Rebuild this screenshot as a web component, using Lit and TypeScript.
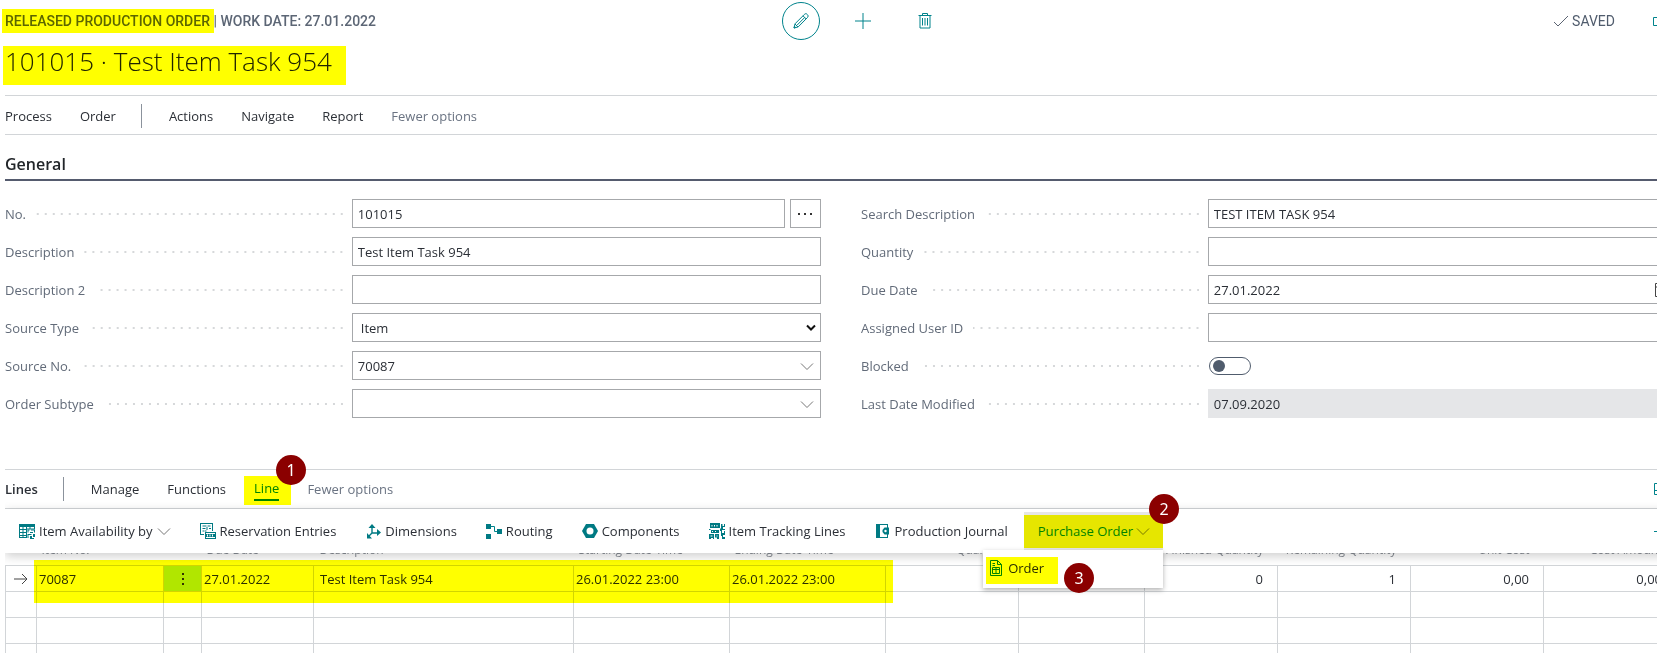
import { LitElement, html, svg, css, nothing } from "lit";
import type { TemplateResult } from "lit";
import { customElement, state } from "lit/decorators.js";
import { classMap } from "lit/directives/class-map.js";

type Kind = "text" | "assist" | "select" | "lookup" | "date" | "switch" | "readonly";

interface Field {
  id: string;
  label: string;
  value: string;
  kind: Kind;
}

interface Column {
  title: string;
  width: number;
  value: string;
  kind?: "arrow" | "more" | "num" | "wide";
}

const LEFT: Field[] = [
  { id: "no", label: "No.", value: "101015", kind: "assist" },
  { id: "description", label: "Description", value: "Test Item Task 954", kind: "text" },
  { id: "description2", label: "Description 2", value: "", kind: "text" },
  { id: "source-type", label: "Source Type", value: "Item", kind: "select" },
  { id: "source-no", label: "Source No.", value: "70087", kind: "lookup" },
  { id: "order-subtype", label: "Order Subtype", value: "", kind: "lookup" },
];

const RIGHT: Field[] = [
  { id: "search", label: "Search Description", value: "TEST ITEM TASK 954", kind: "text" },
  { id: "quantity", label: "Quantity", value: "", kind: "text" },
  { id: "due", label: "Due Date", value: "27.01.2022", kind: "date" },
  { id: "user", label: "Assigned User ID", value: "", kind: "text" },
  { id: "blocked", label: "Blocked", value: "", kind: "switch" },
  { id: "modified", label: "Last Date Modified", value: "07.09.2020", kind: "readonly" },
];

const COLUMNS: Column[] = [
  { title: "", width: 31, value: "", kind: "arrow" },
  { title: "Item No.", width: 127, value: "70087" },
  { title: "", width: 38, value: "", kind: "more" },
  { title: "Due Date", width: 112, value: "27.01.2022" },
  { title: "Description", width: 260, value: "Test Item Task 954", kind: "wide" },
  { title: "Starting Date-Time", width: 156, value: "26.01.2022 23:00" },
  { title: "Ending Date-Time", width: 156, value: "26.01.2022 23:00" },
  { title: "Quantity", width: 133, value: "1", kind: "num" },
  { title: "", width: 126, value: "" },
  { title: "Finished Quantity", width: 133, value: "0", kind: "num" },
  { title: "Remaining Quantity", width: 133, value: "1", kind: "num" },
  { title: "Unit Cost", width: 133, value: "0,00", kind: "num" },
  { title: "Cost Amount", width: 133, value: "0,00", kind: "num" },
];

const icon = (body: unknown, cls = "icon") =>
  html`<svg class=${cls} viewBox="0 0 16 16" width="16" height="16" aria-hidden="true">${body}</svg>`;

const ICONS = {
  pencil: svg`<path class="ln" d="M1 15l1-4.200L11.300 1.500a1.800 1.800 0 0 1 3 0 2 2 0 0 1 .2 3L5.200 13.900zM2 11l3 3M10 2.800l3.200 3.200M4 12.200l7.800-7.800M1 15l1.700-.5-1.200-1.200z"/>`,
  plus: svg`<path class="ln" d="M8 0v16M0 8h16"/>`,
  trash: svg`<path class="ln" d="M1.500 2.500h13M5.500 2.500v-2h5v2M3 2.500v12.500h10V2.500M5.500 5v7.500M8 5v7.500M10.500 5v7.500"/>`,
  check: svg`<path class="ln thin" d="M1 9l4 4L15 3"/>`,
  share: svg`<path class="ln" d="M8 4.500H.5v8h11V9M6 8c1-3 4-5 8-5M11 .5L14.500 3 11 5.500"/>`,
  calendar: svg`<path class="dk" d="M.5 1.500h14v13H.5zM.5 5h14M3 8h2M7 8h2M11 8h2M3 11h2M7 11h2"/>`,
  layout: svg`<path class="ln" d="M.5 2.500h14v11H.5zM.5 9.500h14M5.500 2.500v11"/>`,
  pin: svg`<path class="ln" d="M0 8.500h6M6 4v8M6 5.500h7v5H6"/>`,
  chevron: svg`<path class="chev" d="M2 5.500l6 6 6-6"/>`,
  caret: svg`<path class="caret" d="M4 5.500l4 4 4-4"/>`,
  availability: svg`
    <path class="fl" d="M0 1h16v14H0z"/>
    <path class="wh" d="M1 4h2.500v2H1zM4.500 4H7v2H4.500zM8 4h2.500v1.500H8zM11.500 4h3.500v1.500h-3.500zM1 7h2.500v2H1zM4.500 7H7v2H4.500zM1 10h2.500v2H1zM4.500 10H7v2H4.500zM1 13h2.500v1H1zM4.500 13H7v1H4.500z"/>
    <path class="wh" d="M8 6.500h8V16H8z"/>
    <path class="fl" d="M8.500 6.500h2v1h-1v2h-1zM12 6.500h4v3h-1v-2h-3zM11 9h3v1h-3zM8.500 11h4v1h-3v3h-1zM14 11h2v3h-2zM11 13h2v3h-2zM13 15h2v1h-2z"/>`,
  reservation: svg`
    <path class="fl" d="M0 0h13v8h-1V1H1v10h3v1H0z"/>
    <path class="fl" d="M2.500 2.500h4v1h-4zM2.500 5h3v1h-3zM2.500 7.500h2v1h-2zM7.500 2.500h3v1h-3zM6.500 4h1v3h-1zM9 5h2v1H9zM5 7.500h1.500v1H5z"/>
    <path class="fl" d="M5 9h11v7H5z"/>
    <path class="wh" d="M6 10h9v1H6zM6 14h9v1H6zM7 11.500h1v2H7zM9.500 11.500h1v2h-1zM12 11.500h1v2h-1z"/>`,
  dimensions: svg`
    <path class="ln wide" d="M7 3v7h6M7 10l-4 4"/>
    <path class="fl" d="M7 1l3.500 4h-7zM16 9.500L12 13V6zM2 15.500V10l5 5.500z"/>`,
  routing: svg`
    <path class="fl" d="M0 1h5v5H0zM0 11h5v5H0zM11 6h5v5h-5z"/>
    <path class="ln" d="M5 3.500h3.500v5H11"/>`,
  components: svg`
    <path class="fl" d="M4 1h8l4 7-4 7H4L0 8z"/><circle class="wh" cx="8" cy="8" r="3.500"/>`,
  tracking: svg`
    <path class="fl" d="M1 0h10v5H1zM2 7h8v3H2zM0 6h1.500v1H0zM12 1h1.500v2H15V1h1v3h-2v2h2v1h-3v3h2V8h1v4h-2v2h2v2h-3v-3h-1V8h-1V5.500h1zM0 11h5v5H4v-1H2v1H0zM6 11h4v5H8v-1.500H6z"/>
    <path class="wh" d="M2.500 2h1v1.500h-1zM5 2h1v1.500H5zM7.500 2h1v1.500h-1zM3 8h1v1H3zM6 8h1v1H6zM1.500 12.500h2v1h-2zM7.500 12.500h1v1h-1z"/>`,
  journal: svg`
    <path class="fl" d="M1 1h12v14H1z"/><path class="wh" d="M5 2h7v12H5z"/>
    <path class="fl" d="M9.500 4.500H14v7H9.500L7.500 9V7z"/><circle class="wh" cx="10.500" cy="8" r="1.200"/>`,
  order: svg`
    <path class="ln" d="M2.500.500h7l4 4v11h-11zM9.500.500v4h4M4.500 7.500h7v6h-7zM8 7.500v6M4.500 5.500H7M4.500 3.500H7M4.500 9.500h7"/>`,
};

const LINE_ACTIONS: { label: string; glyph: unknown; menu?: boolean }[] = [
  { label: "Item Availability by", glyph: ICONS.availability, menu: true },
  { label: "Reservation Entries", glyph: ICONS.reservation },
  { label: "Dimensions", glyph: ICONS.dimensions },
  { label: "Routing", glyph: ICONS.routing },
  { label: "Components", glyph: ICONS.components },
  { label: "Item Tracking Lines", glyph: ICONS.tracking },
  { label: "Production Journal", glyph: ICONS.journal },
];

@customElement("app-root")
export class AppRoot extends LitElement {
  @state() private blocked = false;

  static styles = css`
    :host {
      display: block;
      height: 100vh;
      overflow: hidden;
      background: #fff;
      color: #2b2f36;
      font: 13px/20px "Open Sans", "Noto Sans", sans-serif;
    }
    * { box-sizing: border-box; }
    button {
      font: inherit;
      color: inherit;
      background: none;
      border: 0;
      padding: 0;
      white-space: nowrap;
    }
    .page { margin: 0 -20px 0 5px; }
    .icon { flex: none; display: block; }
    .ln { fill: none; stroke: #00838c; stroke-width: 1; }
    .ln.wide { stroke: #007a83; stroke-width: 1.4; }
    .fl { fill: #007a83; }
    .wh { fill: #fff; }
    .dk { fill: none; stroke: #444; }
    .chev { fill: none; stroke: #777; }
    .caret { fill: none; stroke: #111; stroke-width: 2; }
    .thin { stroke: #5b6472; }

    /* marker pen strokes */
    .marked { position: relative; }
    .marked::after {
      content: "";
      position: absolute;
      inset: 0;
      background: #ff0;
      mix-blend-mode: multiply;
      pointer-events: none;
    }

    .top {
      display: grid;
      grid-template-columns: 1fr auto 1fr;
      align-items: center;
      height: 42px;
    }
    .caption {
      font: 500 14px/20px Roboto, sans-serif;
      color: #5c6675;
      white-space: nowrap;
    }
    .caption .marked::after { inset: -4px -4px -4px -3px; }
    .tools { display: flex; align-items: center; gap: 46px; padding-left: 33px; }
    .tools button { display: flex; }
    .tools .ring {
      width: 38px;
      height: 38px;
      margin-right: -11px;
      border: 1px solid #00838c;
      border-radius: 50%;
      align-items: center;
      justify-content: center;
    }
    .status {
      display: flex;
      justify-content: flex-end;
      align-items: center;
      gap: 3px;
      font: 400 14px/20px Roboto, sans-serif;
      color: #505c6d;
    }
    .status button { margin-left: 35px; padding-right: 8px; }

    h1 {
      margin: 0 0 15px;
      font: 300 26px/38px "Open Sans", "Noto Sans", sans-serif;
      color: #212529;
      white-space: nowrap;
    }
    h1 .marked { display: inline-block; padding-right: 14px; }
    h1 .marked::after { inset: 4px 0 -5px -2px; }

    .bar {
      display: flex;
      align-items: center;
      gap: 28px;
      height: 40px;
      padding-top: 2px;
      border-top: 1px solid #d2d5d8;
      border-bottom: 1px solid #d2d5d8;
    }
    .muted { color: #6a7382; }
    .rule { width: 1px; height: 24px; background: #8b929c; margin: 0 -1px 0 -3px; }

    h2 {
      height: 46px;
      margin: 0 0 18px;
      padding-top: 17px;
      border-bottom: 2px solid #555b6e;
      font: 600 16px/24px "Open Sans", "Noto Sans", sans-serif;
      color: #212529;
    }
    .fields {
      display: grid;
      grid-template-columns: 1fr 1fr;
      column-gap: 40px;
    }
    .group { display: grid; row-gap: 9px; align-content: start; }
    .field {
      display: grid;
      grid-template-columns: 17fr 23fr;
      height: 29px;
      align-items: center;
    }
    .field label {
      display: flex;
      align-items: center;
      gap: 10px;
      padding-right: 9px;
      color: #626b79;
      white-space: nowrap;
    }
    .field label::after {
      content: "";
      flex: 1;
      height: 2px;
      background: linear-gradient(90deg, transparent 6px, #d6d8da 6px) right 0 top 0 / 8px 2px;
    }
    .control { display: flex; gap: 5px; height: 29px; align-items: center; }
    .box {
      display: flex;
      flex: 1;
      align-items: center;
      height: 29px;
      min-width: 0;
      border: 1px solid #a6a8ab;
      background: #fff;
      padding-right: 5px;
    }
    .box.native { padding-right: 1px; }
    .box input, .box select {
      flex: 1;
      min-width: 0;
      height: 100%;
      border: 0;
      outline: 0;
      background: none;
      padding: 0 5px;
      font: inherit;
      color: #2b2f36;
      appearance: none;
    }
    .box select { padding-left: 8px; }
    .box.readonly { border-color: #e5e6e8; background: #e5e6e8; }
    .assist {
      display: grid;
      place-items: center;
      width: 31px;
      height: 29px;
      border: 1px solid #a6a8ab;
    }
    .switch {
      appearance: none;
      display: flex;
      align-items: center;
      width: 42px;
      height: 18px;
      margin: 0 0 0 1px;
      padding: 0 3px;
      border: 1px solid #505c6d;
      border-radius: 9px;
      background: #fff;
    }
    .switch::before { content: ""; width: 12px; height: 12px; border-radius: 50%; background: #505c6d; }
    .switch:checked { justify-content: flex-end; }

    .lines { margin-top: 51px; }
    .lines .bar { padding: 0; }
    .lines .bar h3 { margin: 0; font: 600 13px/20px "Open Sans", "Noto Sans", sans-serif; }
    .bar .active {
      color: #00838c;
      position: relative;
      line-height: 21px;
      border-bottom: 2px solid #00838c;
    }
    .lines .bar .active.marked::after { inset: -2px -12px -6px -10px; }
    .end { margin-left: auto; padding-right: 7px; }
    .badge {
      position: absolute;
      z-index: 5;
      display: grid;
      place-items: center;
      width: 30px;
      height: 30px;
      border-radius: 50%;
      background: #8b0000;
      color: #fff;
      font: 16px/30px "Noto Sans", sans-serif;
    }
    .b1 { left: 22px; top: -23px; }
    .b2 { right: -16px; top: -18px; }
    .b3 { left: 81px; top: 13px; }

    .actions {
      position: relative;
      z-index: 2;
      display: flex;
      align-items: center;
      height: 44px;
      padding-left: 14px;
      gap: 29px;
      background: #fff;
      box-shadow: 0 3px 10px rgba(0, 0, 0, 0.2);
      clip-path: inset(-40px 0 -60px 0);
    }
    .actions > button { display: flex; align-items: center; gap: 4px; }
    .actions > button .icon + span + .icon { margin: 0 -1px; }
    .drop { position: relative; margin-left: -13px; }
    .drop > button {
      display: flex;
      align-items: center;
      gap: 2px;
      height: 38px;
      padding: 0 12px 0 14px;
      background: #e6e6e6;
      color: #00838c;
    }
    .drop > button.marked::after { inset: 3px 0 2px; }
    .menu {
      position: absolute;
      top: 38px;
      right: 0;
      width: 180px;
      height: 38px;
      background: #fff;
      box-shadow: 0 2px 5px rgba(0, 0, 0, 0.3);
    }
    .menu button { display: flex; align-items: center; gap: 4px; margin: 7px 3px; height: 27px; padding: 0 14px 5px 2px; }
    .menu button.marked::after { inset: 0; }

    .grid-area { position: relative; margin-top: -11px; }
    .grid-area .pen {
      position: absolute;
      left: 29px;
      width: 859px;
      top: 18px;
      height: 43px;
      background: #ff0;
      mix-blend-mode: multiply;
      pointer-events: none;
    }
    table { border-collapse: collapse; table-layout: fixed; width: 1671px; }
    th {
      height: 23px;
      padding: 0 5px;
      font: 12px/16px "Open Sans", "Noto Sans", sans-serif;
      color: #888d95;
      text-align: left;
      vertical-align: top;
      white-space: nowrap;
    }
    td {
      height: 26px;
      padding: 1px 2px 0;
      border: 1px solid #d2d5d8;
      white-space: nowrap;
      line-height: 20px;
    }
    td.wide, th.wide { padding-left: 6px; }
    td.num, th.num { text-align: right; padding-right: 14px; }
    td.more { background: #b1e6e8; }
    td .icon { margin: 0 auto; }
    .arrow { fill: none; stroke: #444; }
    .dot { fill: #333; }
  `;

  private renderControl(f: Field): TemplateResult {
    if (f.kind === "switch") {
      return html`<input
        class="switch"
        id=${f.id}
        type="checkbox"
        role="switch"
        .checked=${this.blocked}
        @change=${(e: Event) => (this.blocked = (e.target as HTMLInputElement).checked)}
      />`;
    }
    if (f.kind === "select") {
      return html`<div class="box native">
        <select id=${f.id}><option>${f.value}</option></select>
        ${icon(ICONS.caret)}
      </div>`;
    }
    const glyph = f.kind === "lookup" ? ICONS.chevron : f.kind === "date" ? ICONS.calendar : null;
    return html`<div class=${classMap({ box: true, readonly: f.kind === "readonly" })}>
        <input id=${f.id} type="text" .value=${f.value} ?readonly=${f.kind === "readonly"} />
        ${glyph ? html`<button aria-label="Choose a value for ${f.label}">${icon(glyph)}</button>` : nothing}
      </div>
      ${f.kind === "assist"
        ? html`<button class="assist" aria-label="Assist edit">
            <svg viewBox="0 0 16 4" width="16" height="4"><path class="dot" d="M1 1h2v2H1zM7 1h2v2H7zM13 1h2v2h-2z" /></svg>
          </button>`
        : nothing}`;
  }

  private renderGroup(fields: Field[]) {
    return html`<div class="group">
      ${fields.map(
        (f) => html`<div class="field">
          <label for=${f.id}>${f.label}</label>
          <div class="control">${this.renderControl(f)}</div>
        </div>`,
      )}
    </div>`;
  }

  private renderCell(c: Column, filled: boolean) {
    if (!filled) return html`<td></td>`;
    if (c.kind === "arrow") return html`<td>${icon(svg`<path class="arrow" d="M1 8h13M9 3l5 5-5 5"/>`)}</td>`;
    if (c.kind === "more")
      return html`<td class="more">${icon(svg`<path class="dot" d="M7 2h2v2H7zM7 7h2v2H7zM7 12h2v2H7z"/>`)}</td>`;
    return html`<td class=${c.kind ?? ""}>${c.value}</td>`;
  }

  private renderTable() {
    return html`<div class="grid-area">
      <table>
        <colgroup>${COLUMNS.map((c) => html`<col width=${c.width} />`)}</colgroup>
        <thead>
          <tr>${COLUMNS.map((c) => html`<th class=${c.kind ?? ""}>${c.title}</th>`)}</tr>
        </thead>
        <tbody>
          ${[true, false, false, false].map(
            (filled) => html`<tr>${COLUMNS.map((c) => this.renderCell(c, filled))}</tr>`,
          )}
        </tbody>
      </table>
      <div class="pen"></div>
    </div>`;
  }

  render() {
    return html`<main class="page">
      <header class="top">
        <div class="caption"><span class="marked">RELEASED PRODUCTION ORDER</span> | WORK DATE: 27.01.2022</div>
        <div class="tools">
          <button class="ring" aria-label="Edit">${icon(ICONS.pencil)}</button>
          <button aria-label="New">${icon(ICONS.plus)}</button>
          <button aria-label="Delete">${icon(ICONS.trash)}</button>
        </div>
        <div class="status">
          ${icon(ICONS.check)}<span>SAVED</span>
          <button aria-label="Share">${icon(ICONS.share)}</button>
        </div>
      </header>
      <h1><span class="marked">101015 · Test Item Task 954</span></h1>
      <nav class="bar">
        <button>Process</button>
        <button>Order</button>
        <span class="rule"></span>
        <button>Actions</button>
        <button>Navigate</button>
        <button>Report</button>
        <button class="muted">Fewer options</button>
      </nav>
      <section>
        <h2>General</h2>
        <div class="fields">${this.renderGroup(LEFT)}${this.renderGroup(RIGHT)}</div>
      </section>
      <section class="lines">
        <nav class="bar">
          <h3>Lines</h3>
          <span class="rule"></span>
          <button>Manage</button>
          <button>Functions</button>
          <button class="active marked">Line<span class="badge b1">1</span></button>
          <button class="muted">Fewer options</button>
          <button class="end" aria-label="Toggle layout">${icon(ICONS.layout)}</button>
        </nav>
        <div class="actions">
          ${LINE_ACTIONS.map(
            (a) => html`<button>${icon(a.glyph)}<span>${a.label}</span>${a.menu ? icon(ICONS.chevron) : nothing}</button>`,
          )}
          <div class="drop">
            <button class="marked" aria-expanded="true">Purchase Order${icon(ICONS.chevron)}</button>
            <span class="badge b2">2</span>
            <div class="menu">
              <button class="marked">${icon(ICONS.order)}Order</button>
              <span class="badge b3">3</span>
            </div>
          </div>
          <button class="end" aria-label="Pin">${icon(ICONS.pin)}</button>
        </div>
        ${this.renderTable()}
      </section>
    </main>`;
  }
}
